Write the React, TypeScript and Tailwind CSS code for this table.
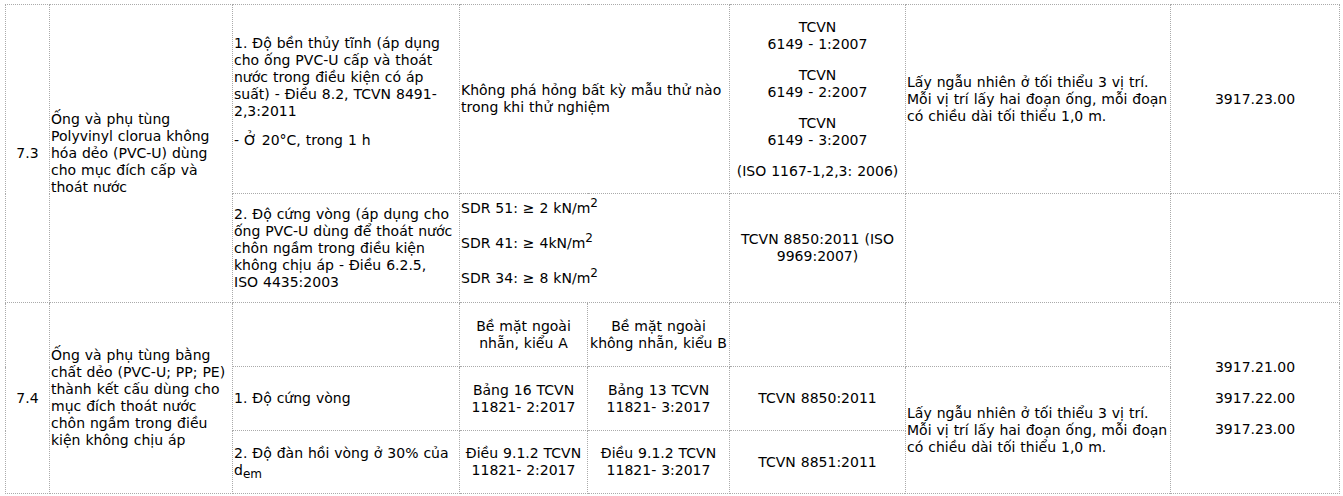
export default function App() {
  const cell = "border border-dotted border-[#aaa] px-px align-middle"
  const center = `${cell} text-center`

  return (
    <div className="pl-[5px] pt-[4px] bg-white min-h-screen font-['DejaVu_Sans',Verdana,sans-serif] text-[14px] leading-[17px] text-black [word-spacing:0.5px]">
      <table className="table-fixed border-collapse w-[1335px]">
        <colgroup>
          <col className="w-[44px]" />
          <col className="w-[183px]" />
          <col className="w-[227px]" />
          <col className="w-[128px]" />
          <col className="w-[142px]" />
          <col className="w-[176px]" />
          <col className="w-[265px]" />
          <col className="w-[169px]" />
        </colgroup>
        <tbody>
          {/* 7.3 */}
          <tr className="h-[189px]">
            <td rowSpan={2} className={center}>7.3</td>
            <td rowSpan={2} className={cell}>
              Ống và phụ tùng<br />
              Polyvinyl clorua không<br />
              hóa dẻo (PVC-U) dùng<br />
              cho mục đích cấp và<br />
              thoát nước
            </td>
            <td className={`${cell} pb-[14px]`}>
              <div className="flex flex-col gap-[12px]">
                <p>
                  1. Độ bền thủy tĩnh (áp dụng<br />
                  cho ống PVC-U cấp và thoát<br />
                  nước trong điều kiện có áp<br />
                  suất) - Điều 8.2, TCVN 8491-<br />
                  2,3:2011
                </p>
                <p>- Ở 20°C, trong 1 h</p>
              </div>
            </td>
            <td colSpan={2} className={cell}>
              Không phá hỏng bất kỳ mẫu thử nào<br />
              trong khi thử nghiệm
            </td>
            <td className={center}>
              <div className="flex flex-col gap-[14px]">
                <p>TCVN<br />6149 - 1:2007</p>
                <p>TCVN<br />6149 - 2:2007</p>
                <p>TCVN<br />6149 - 3:2007</p>
                <p className="whitespace-nowrap">(ISO 1167-1,2,3: 2006)</p>
              </div>
            </td>
            <td className={cell}>
              Lấy ngẫu nhiên ở tối thiểu 3 vị trí.<br />
              Mỗi vị trí lấy hai đoạn ống, mỗi đoạn<br />
              có chiều dài tối thiểu 1,0 m.
            </td>
            <td className={center}>3917.23.00</td>
          </tr>
          <tr className="h-[109px]">
            <td className={cell}>
              2. Độ cứng vòng (áp dụng cho<br />
              ống PVC-U dùng để thoát nước<br />
              chôn ngầm trong điều kiện<br />
              không chịu áp - Điều 6.2.5,<br />
              ISO 4435:2003
            </td>
            <td colSpan={2} className={`${cell} pb-[10px]`}>
              <div className="flex flex-col gap-[18px]">
                <p>SDR 51: ≥ 2 kN/m<sup className="text-[12px]">2</sup></p>
                <p>SDR 41: ≥ 4kN/m<sup className="text-[12px]">2</sup></p>
                <p>SDR 34: ≥ 8 kN/m<sup className="text-[12px]">2</sup></p>
              </div>
            </td>
            <td className={center}>
              TCVN 8850:2011 (ISO<br />
              9969:2007)
            </td>
            <td className={cell}></td>
            <td className={cell}></td>
          </tr>

          {/* 7.4 */}
          <tr className="h-[64px]">
            <td rowSpan={3} className={center}>7.4</td>
            <td rowSpan={3} className={cell}>
              Ống và phụ tùng bằng<br />
              chất dẻo (PVC-U; PP; PE)<br />
              thành kết cấu dùng cho<br />
              mục đích thoát nước<br />
              chôn ngầm trong điều<br />
              kiện không chịu áp
            </td>
            <td className={cell}></td>
            <td className={center}>
              Bề mặt ngoài<br />
              nhẵn, kiểu A
            </td>
            <td className={center}>
              Bề mặt ngoài<br />
              không nhẵn, kiểu B
            </td>
            <td className={cell}></td>
            <td className={cell}></td>
            <td rowSpan={3} className={center}>
              <div className="flex flex-col gap-[14px]">
                <p>3917.21.00</p>
                <p>3917.22.00</p>
                <p>3917.23.00</p>
              </div>
            </td>
          </tr>
          <tr className="h-[64px]">
            <td className={cell}>1. Độ cứng vòng</td>
            <td className={center}>
              Bảng 16 TCVN<br />
              11821- 2:2017
            </td>
            <td className={center}>
              Bảng 13 TCVN<br />
              11821- 3:2017
            </td>
            <td className={center}>TCVN 8850:2011</td>
            <td rowSpan={2} className={cell}>
              Lấy ngẫu nhiên ở tối thiểu 3 vị trí.<br />
              Mỗi vị trí lấy hai đoạn ống, mỗi đoạn<br />
              có chiều dài tối thiểu 1,0 m.
            </td>
          </tr>
          <tr className="h-[63px]">
            <td className={cell}>
              2. Độ đàn hồi vòng ở 30% của<br />
              d<sub className="text-[12px]">em</sub>
            </td>
            <td className={center}>
              Điều 9.1.2 TCVN<br />
              11821- 2:2017
            </td>
            <td className={center}>
              Điều 9.1.2 TCVN<br />
              11821- 3:2017
            </td>
            <td className={center}>TCVN 8851:2011</td>
          </tr>
        </tbody>
      </table>
    </div>
  )
}
